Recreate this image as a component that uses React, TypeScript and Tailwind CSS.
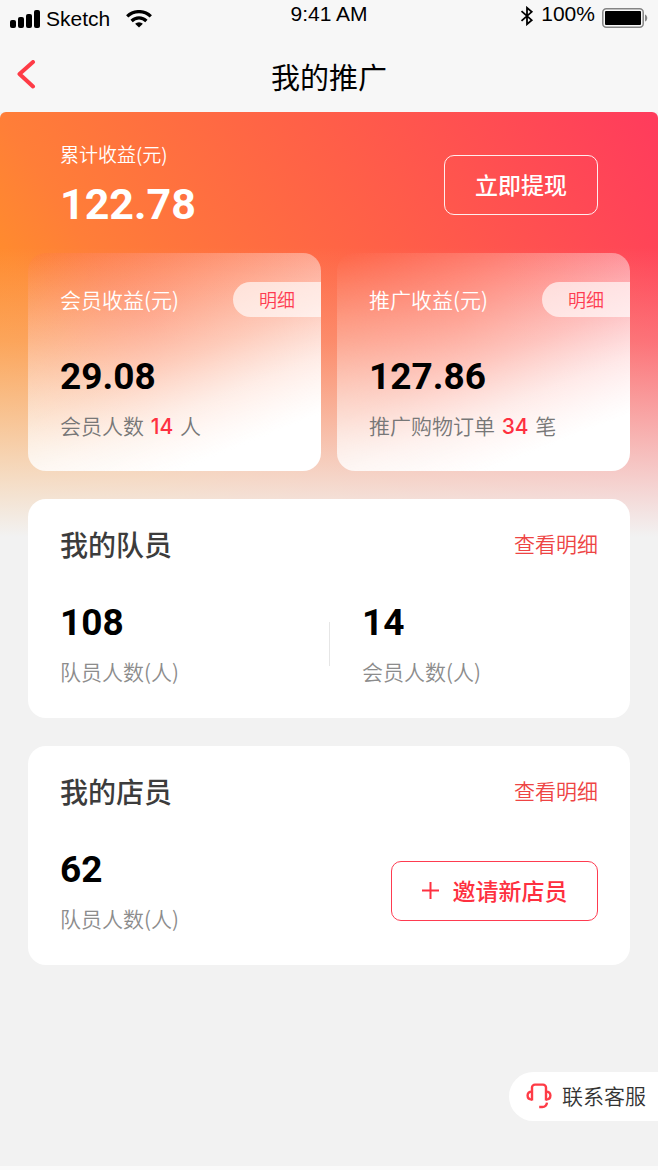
import type { ReactNode } from "react";

function SignalIcon() {
  return (
    <svg width="30" height="18" viewBox="0 0 30 18" aria-hidden="true">
      <rect x="0" y="10" width="6" height="8" rx="2" />
      <rect x="8" y="7" width="6" height="11" rx="2" />
      <rect x="16" y="4" width="6" height="14" rx="2" />
      <rect x="24" y="0" width="6" height="18" rx="2" />
    </svg>
  );
}

function WifiIcon() {
  return (
    <svg width="26" height="18" viewBox="0 0 26 18" fill="none" stroke="currentColor" strokeWidth="3.2" aria-hidden="true">
      <path d="M1.2 6.4a16.8 16.8 0 0 1 23.6 0" />
      <path d="M5.6 11a10.5 10.5 0 0 1 14.8 0" />
      <path d="M13 17.6l-3.9-3.8a5.5 5.5 0 0 1 7.8 0z" fill="currentColor" stroke="none" />
    </svg>
  );
}

function BluetoothIcon() {
  return (
    <svg width="14" height="20" viewBox="0 0 14 20" fill="none" stroke="currentColor" strokeWidth="1.8" aria-hidden="true">
      <path d="M1.5 5.2l10.2 9L7 18.2V1.8l4.7 4-10.2 9" />
    </svg>
  );
}

function BatteryIcon() {
  return (
    <svg width="46" height="20" viewBox="0 0 46 20" aria-hidden="true">
      <rect x="0.8" y="0.8" width="40.4" height="18.4" rx="3.5" fill="none" stroke="#858585" strokeWidth="1.5" />
      <rect x="3" y="3" width="36" height="14" rx="1" />
      <path d="M43 6.5c3 1 3 6 0 7z" fill="#858585" />
    </svg>
  );
}

function HeadsetIcon() {
  return (
    <svg width="26" height="26" viewBox="0 0 26 26" fill="none" stroke="#fe3b46" strokeWidth="2.4" aria-hidden="true">
      <path d="M6 17.4V4.6a3 3 0 0 1 3-3h8a3 3 0 0 1 3 3v12.8" />
      <path d="M6 8.6C3 8.6 1.6 10 1.6 12.6S3 16.6 6 16.6" />
      <path d="M20 8.6c3 0 4.4 1.4 4.4 4S23 16.6 20 16.6" />
      <path d="M21 19.6c-.4 3-2 4.4-4.8 4.4h-3" />
    </svg>
  );
}

function Amount({ children }: { children: ReactNode }) {
  return <p className="font-[Roboto] text-[37px] leading-10 font-bold text-black">{children}</p>;
}

type IncomeProps = { title: string; amount: string; label: string; count: number; unit: string };

function IncomeCard({ title, amount, label, count, unit }: IncomeProps) {
  return (
    <section className="overflow-hidden rounded-[18px] bg-[linear-gradient(158deg,rgba(255,255,255,0)_0%,rgba(255,255,255,0.38)_33%,rgba(255,255,255,0.58)_50%,rgba(255,255,255,0.82)_66%,#fff_83%),radial-gradient(ellipse_at_42%_30%,rgba(255,90,60,0.5),rgba(255,110,60,0)_75%)] pt-[29px] pb-8 pl-8">
      <div className="flex h-[35px] items-center justify-between">
        <h2 className="text-[21px] font-[350] text-white">{title}</h2>
        <button className="h-full w-[88px] rounded-l-full bg-white/65 text-[18px] font-[350] text-[#fe3b50]">明细</button>
      </div>
      <div className="mt-10">
        <Amount>{amount}</Amount>
        <p className="mt-[14px] text-[21px] leading-7 font-[350] text-[#777]">
          {label} <span className="mx-[2px] font-[Inter] leading-none font-medium text-[#fe3040]">{count}</span> {unit}
        </p>
      </div>
    </section>
  );
}

function Stat({ value, label }: { value: number; label: string }) {
  return (
    <div>
      <Amount>{value}</Amount>
      <p className="mt-[14px] text-[21px] leading-7 font-[350] text-[#8c8c8c]">{label}</p>
    </div>
  );
}

function TeamCard({ title, children }: { title: string; children: ReactNode }) {
  return (
    <section className="mt-7 rounded-[18px] bg-white px-8 pt-[27px] pb-[33px]">
      <div className="flex h-[35px] items-center justify-between">
        <h2 className="text-[28px] font-medium text-[#3c3c3c]">{title}</h2>
        <a href="#" className="text-[21px] font-[350] text-[#ee4444]">
          查看明细
        </a>
      </div>
      <div className="mt-[42px]">{children}</div>
    </section>
  );
}

export default function App() {
  return (
    <div className="min-h-screen border-b-4 border-[#fafafa] bg-[#f2f2f2] font-['Noto_Sans_CJK_SC',sans-serif]">
      <header className="bg-[#f7f7f7] text-black">
        <div className="grid h-[37px] grid-cols-3 font-['Liberation_Sans',sans-serif] text-[21px] leading-7">
          <div className="flex items-center gap-[6px] pl-[10px]">
            <SignalIcon />
            <span>Sketch</span>
            <span className="pl-[10px]">
              <WifiIcon />
            </span>
          </div>
          <div className="text-center">9:41 AM</div>
          <div className="flex justify-end pr-[10px]">
            <span className="flex items-center gap-[7px] self-start">
              <span className="pt-1">
                <BluetoothIcon />
              </span>
              100%
              <span className="pt-2">
                <BatteryIcon />
              </span>
            </span>
          </div>
        </div>
        <div className="grid h-[75px] grid-cols-[1fr_auto_1fr] items-center">
          <button aria-label="返回" className="justify-self-start pl-4">
            <svg width="20" height="30" viewBox="0 0 20 30" fill="none" stroke="#fe3b46" strokeWidth="4" strokeLinecap="round" strokeLinejoin="round">
              <path d="M17 2L3.5 14 17 26.5" />
            </svg>
          </button>
          <h1 className="pt-1 text-[29px]">我的推广</h1>
        </div>
      </header>

      <main className="rounded-t-[6px] bg-[linear-gradient(to_bottom,rgba(242,242,242,0)_135px,rgba(242,242,242,0.24)_230px,rgba(242,242,242,0.55)_310px,#f2f2f2_425px),linear-gradient(57deg,#ff9424_0px,#ff8a2f_160px,#ff7e38_231px,#ff5f48_490px,#ff3c5c_775px)] bg-[length:100%_425px] bg-no-repeat px-7 pb-24">
        <div className="flex items-center justify-between px-8 pt-[30px] pb-[25px] text-white">
          <div>
            <p className="text-[19px] leading-6 font-[350]">累计收益(元)</p>
            <p className="mt-[14px] font-[Roboto] text-[43px] leading-[48px] font-bold">122.78</p>
          </div>
          <button className="h-[60px] w-[154px] rounded-[10px] border border-white/90 pb-[2px] text-[23px] font-medium">立即提现</button>
        </div>

        <div className="grid grid-cols-2 gap-4">
          <IncomeCard title="会员收益(元)" amount="29.08" label="会员人数" count={14} unit="人" />
          <IncomeCard title="推广收益(元)" amount="127.86" label="推广购物订单" count={34} unit="笔" />
        </div>

        <TeamCard title="我的队员">
          <div className="grid grid-cols-2">
            <Stat value={108} label="队员人数(人)" />
            <div className="flex items-center gap-8">
              <div className="h-11 w-px bg-[#e6e6e6]" />
              <Stat value={14} label="会员人数(人)" />
            </div>
          </div>
        </TeamCard>

        <TeamCard title="我的店员">
          <div className="flex items-center justify-between">
            <Stat value={62} label="队员人数(人)" />
            <button className="flex h-[60px] w-[207px] items-center justify-center gap-[14px] rounded-[10px] border border-[#fe3b50] pb-[2px] text-[23px] font-medium text-[#fe3040]">
              <svg width="17" height="17" viewBox="0 0 17 17" stroke="currentColor" strokeWidth="2" aria-hidden="true">
                <path d="M8.5 0v17M0 8.5h17" />
              </svg>
              邀请新店员
            </button>
          </div>
        </TeamCard>
      </main>

      <button className="fixed right-0 bottom-[49px] flex h-[49px] items-center gap-[10px] rounded-l-full bg-white pr-3 pb-[2px] pl-[17px] text-[21px] font-[350] text-[#333]">
        <HeadsetIcon />
        联系客服
      </button>
    </div>
  );
}
